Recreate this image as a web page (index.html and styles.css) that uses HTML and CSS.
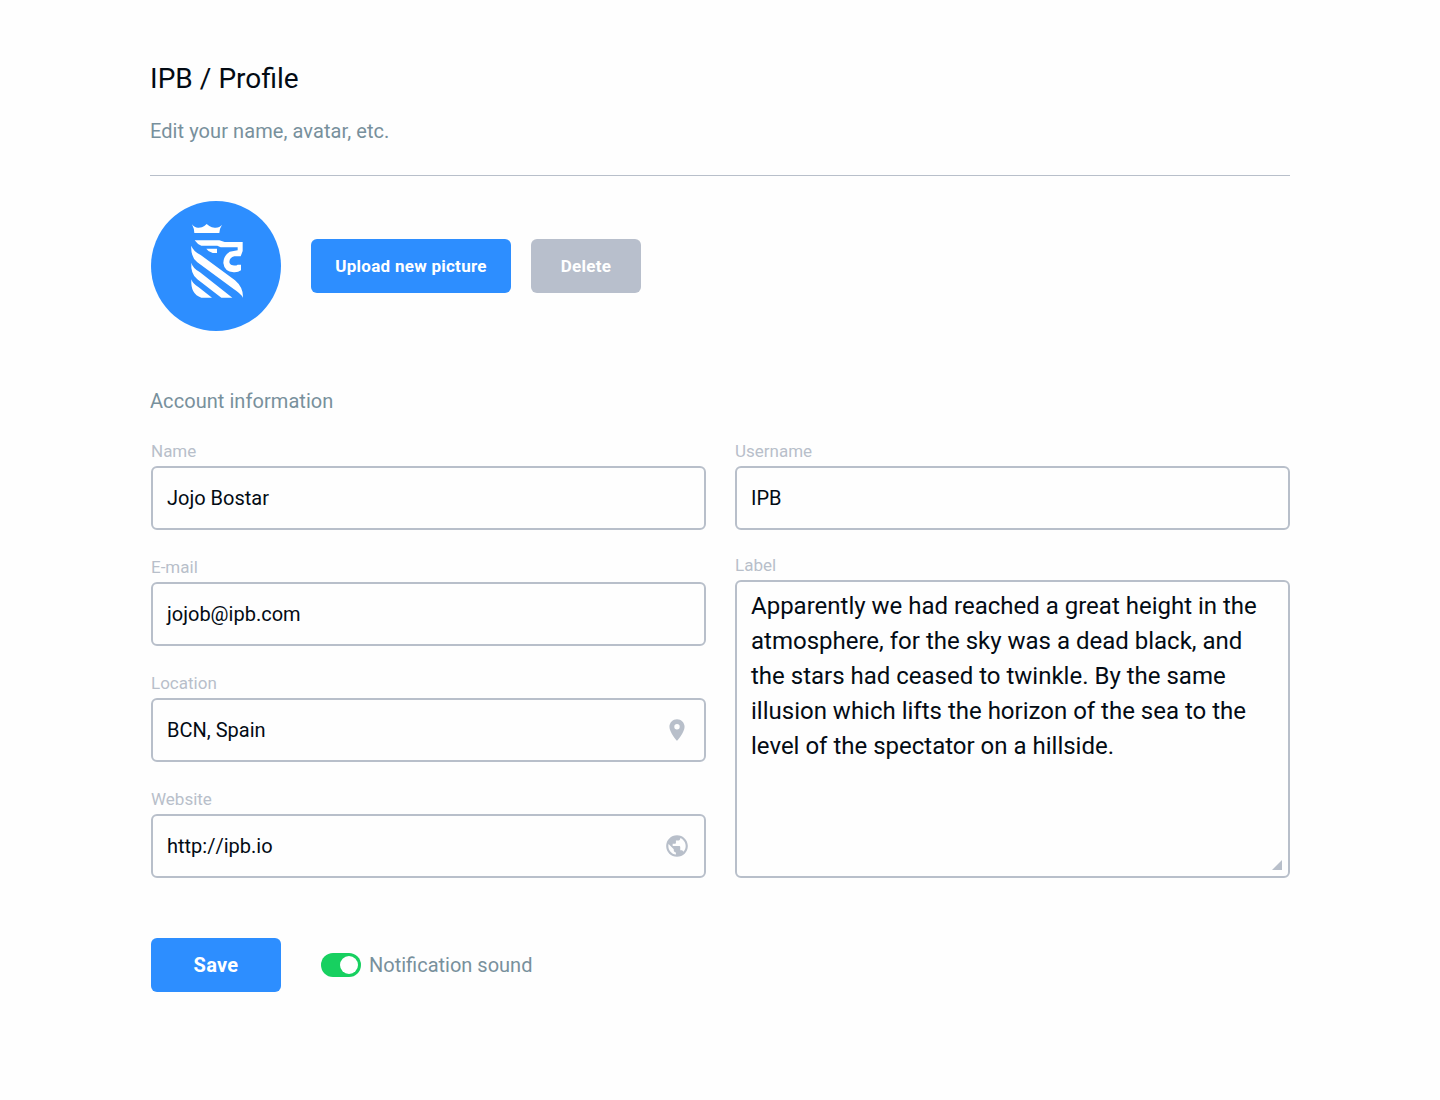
FILE: index.html
```html
<!DOCTYPE html>
<html lang="en">
<head>
<meta charset="utf-8">
<title>IPB / Profile</title>
<link rel="stylesheet" href="styles.css">
</head>
<body>
<main class="page">
  <header class="header">
    <h1 class="title">IPB / Profile</h1>
    <p class="subtitle">Edit your name, avatar, etc.</p>
  </header>

  <section class="picture">
    <svg class="avatar" viewBox="0 0 130 130" aria-hidden="true">
      <circle cx="65" cy="65" r="65" fill="#2d8eff"/>
      <g fill="#fff" transform="translate(29 14) scale(.33333)">
        <path d="M36 28Q44 39 56 38Q67 38 73 33L80 27L88 33Q96 39 107 38Q119 38 126 29Q118 42 118 54H43Q43 42 36 28Z"/>
        <path d="M44 76H118L134 81H188V108L182 124H163Q149 127 148 141Q149 150 159 151Q168 153 173 149H183V166Q174 173 161 172Q133 170 130 144Q130 123 149 110L173 106V97H122L112 92H64Q52 88 44 76Z"/>
        <path d="M79 101H111V114H98Q85 111 79 101Z"/>
        <path d="M34 92Q39 108 62 120L165 196Q190 217 189 248Q182 236 162 223L52 142Q31 125 34 92Z"/>
        <path d="M34 143Q37 158 60 172L157 248H124L52 193Q31 176 34 143Z"/>
        <path d="M34 193Q37 206 56 217L96 248H64Q31 238 34 193Z"/>
      </g>
    </svg>
    <button class="btn btn-upload" type="button">Upload new picture</button>
    <button class="btn btn-delete" type="button">Delete</button>
  </section>

  <form class="account">
    <h2 class="section-title">Account information</h2>
    <div class="columns">
      <div class="column">
        <label class="field"><span class="caption">Name</span>
          <span class="box">Jojo Bostar</span></label>
        <label class="field"><span class="caption">E-mail</span>
          <span class="box">jojob@ipb.com</span></label>
        <label class="field"><span class="caption">Location</span>
          <span class="box">BCN, Spain
            <svg class="icon" viewBox="0 0 24 24"><path d="M12 2C8.13 2 5 5.13 5 9c0 5.25 7 13 7 13s7-7.75 7-13c0-3.87-3.13-7-7-7zm0 9.5a2.5 2.5 0 0 1 0-5 2.5 2.5 0 0 1 0 5z"/></svg></span></label>
        <label class="field"><span class="caption">Website</span>
          <span class="box box-url">http://ipb.io
            <svg class="icon" viewBox="0 0 24 24"><path d="M12 2C6.48 2 2 6.48 2 12s4.48 10 10 10 10-4.48 10-10S17.52 2 12 2zm-1 17.93c-3.95-.49-7-3.85-7-7.93 0-.62.08-1.21.21-1.79L9 15v1c0 1.1.9 2 2 2v1.930zm6.900-2.540c-.26-.81-1-1.390-1.900-1.390h-1v-3c0-.55-.45-1-1-1H8v-2h2c.55 0 1-.45 1-1V7h2c1.100 0 2-.9 2-2v-.41c2.930 1.190 5 4.060 5 7.410 0 2.080-.8 3.970-2.100 5.390z"/></svg></span></label>
      </div>
      <div class="column column-right">
        <label class="field"><span class="caption">Username</span>
          <span class="box">IPB</span></label>
        <label class="field field-grow"><span class="caption">Label</span>
          <span class="box box-area">Apparently we had reached a great height in the<br>atmosphere, for the sky was a dead black, and<br>the stars had ceased to twinkle. By the same<br>illusion which lifts the horizon of the sea to the<br>level of the spectator on a hillside.
            <svg class="grip" viewBox="0 0 10 10"><path d="M10 0V10H0Z"/></svg></span></label>
      </div>
    </div>
    <div class="actions">
      <button class="btn btn-save" type="button">Save</button>
      <span class="toggle"><span class="knob"></span></span>
      <span class="toggle-label">Notification sound</span>
    </div>
  </form>
</main>
</body>
</html>
```
FILE: styles.css
```css
* { box-sizing: border-box; }
body {
  margin: 0;
  background: #fefefe;
  color: #030b14;
  font-family: Roboto, "Liberation Sans", sans-serif;
}
.page { width: 1140px; margin: 0 auto; padding-top: 59px; }
h1, h2, p { margin: 0; font-weight: 400; }

.header { height: 117px; border-bottom: 1px solid #b8bfca; }
.title { font-size: 28px; line-height: 40px; letter-spacing: .04px; font-feature-settings: "liga" 1; }
.subtitle { margin-top: 17px; font-size: 20px; line-height: 30px; letter-spacing: .08px; color: #78909c; }

.picture { display: flex; align-items: center; margin: 25px 0 0 1px; }
.avatar { width: 130px; height: 130px; margin-right: 30px; }
.btn {
  height: 54px;
  padding: 0;
  border: 0;
  border-radius: 6px;
  background: #2d8eff;
  color: #fff;
  font: 700 17px/54px Roboto, "Liberation Sans", sans-serif;
  letter-spacing: .27px;
}
.btn-upload { width: 200px; }
.btn-delete { width: 110px; margin-left: 20px; background: #b8bfcc; }

.section-title { margin-top: 55px; font-size: 20px; line-height: 30px; letter-spacing: .06px; color: #78909c; }
.columns { display: grid; grid-template-columns: 555px 555px; gap: 29px; margin: 25px 0 0 1px; }
.column { display: flex; flex-direction: column; gap: 27px; }
.column-right { gap: 25px; }
.field { display: flex; flex-direction: column; }
.field-grow { flex: 1; }
.caption { height: 25px; font-size: 17px; line-height: 21px; color: #b8bfca; }
.box {
  display: flex;
  align-items: center;
  justify-content: space-between;
  height: 64px;
  padding: 0 14px;
  border: 2px solid #b8bfca;
  border-radius: 6px;
  font-size: 20px;
}
.box-url { font-kerning: none; }
.box-area {
  position: relative;
  display: block;
  flex: 1;
  padding-top: 7px;
  font-size: 24px;
  line-height: 35px;
}
.icon { width: 26px; height: 26px; fill: #b8bfca; }
.grip { position: absolute; right: 6px; bottom: 6px; width: 10px; height: 10px; fill: #b8bfca; }

.actions { display: flex; align-items: center; margin: 60px 0 0 1px; }
.btn-save { width: 130px; margin-right: 40px; font-size: 20px; }
.toggle { display: flex; align-items: center; justify-content: flex-end; width: 40px; height: 24px; padding-right: 3px; border-radius: 12px; background: #17d060; }
.knob { width: 18px; height: 18px; border-radius: 50%; background: #fff; }
.toggle-label { margin-left: 8px; font-size: 20px; line-height: 30px; color: #78909c; }
```
